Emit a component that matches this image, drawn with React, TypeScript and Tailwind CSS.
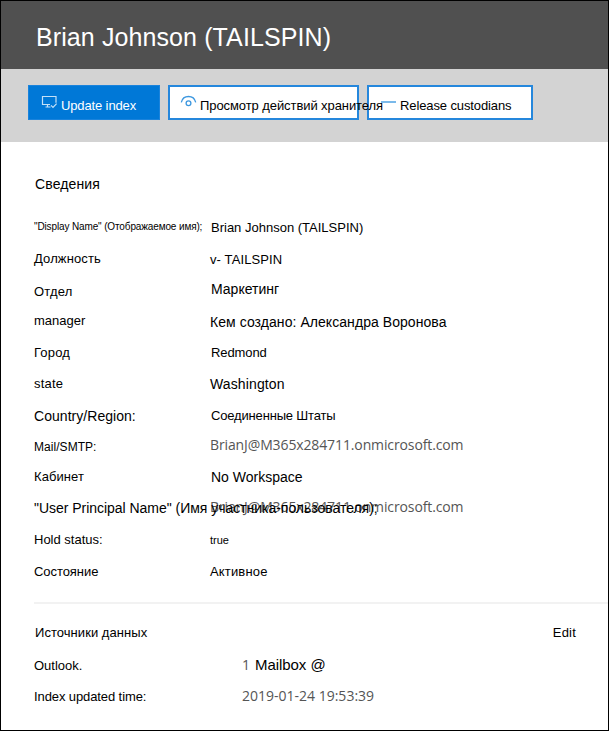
import type { ReactNode } from "react";

type Cell = { text: string; cls: string };
type Row = { label: Cell; value: Cell };

const mail = "pt-[7px] font-['Open_Sans',sans-serif] text-[14px] tracking-[-0.12px] text-[#555555]";

const details: Row[] = [
  {
    label: { text: '"Display Name" (Отображаемое имя);', cls: "pt-[6px] text-[10px] tracking-[-0.13px]" },
    value: { text: "Brian Johnson (TAILSPIN)", cls: "pt-[7px] pl-[1px]" },
  },
  {
    label: { text: "Должность", cls: "pt-[7px] tracking-[0.13px]" },
    value: { text: "v- TAILSPIN", cls: "pt-[8px] tracking-[0.12px]" },
  },
  {
    label: { text: "Отдел", cls: "pt-[9px] tracking-[0.18px]" },
    value: { text: "Маркетинг", cls: "pt-[6px] pl-[1px] text-[14px]" },
  },
  {
    label: { text: "manager", cls: "pt-[7px]" },
    value: { text: "Кем создано: Александра Воронова", cls: "pt-[8px] text-[14px] tracking-[0.06px]" },
  },
  {
    label: { text: "Город", cls: "pt-[8px] tracking-[0.17px]" },
    value: { text: "Redmond", cls: "pt-[8px] pl-[1px] tracking-[-0.1px]" },
  },
  {
    label: { text: "state", cls: "pt-[8px] tracking-[0.2px]" },
    value: { text: "Washington", cls: "pt-[8px] text-[14px] tracking-[0.12px]" },
  },
  {
    label: { text: "Country/Region:", cls: "pt-[9px] text-[14px] tracking-[0.04px]" },
    value: { text: "Соединенные Штаты", cls: "pt-[9px] pl-[1px] tracking-[-0.17px]" },
  },
  {
    label: { text: "Mail/SMTP:", cls: "pt-[9px] text-[12px] tracking-[0.05px]" },
    value: { text: "BrianJ@M365x284711.onmicrosoft.com", cls: mail },
  },
  {
    label: { text: "Кабинет", cls: "pt-[8px] tracking-[0.08px]" },
    value: { text: "No Workspace", cls: "pt-[8px] pl-[1px] text-[14px]" },
  },
  {
    label: {
      text: '"User Principal Name" (Имя участника-пользователя);',
      cls: "z-10 pt-[8px] text-[14px] tracking-[-0.03px]",
    },
    value: { text: "BrianJ@M365x284711.onmicrosoft.com", cls: mail },
  },
  {
    label: { text: "Hold status:", cls: "pt-[9px]" },
    value: { text: "true", cls: "pt-[9px] text-[11px]" },
  },
  {
    label: { text: "Состояние", cls: "pt-[10px] tracking-[-0.06px]" },
    value: { text: "Активное", cls: "pt-[10px] tracking-[0.16px]" },
  },
];

function ActionButton({ className, icon, children }: { className: string; icon: ReactNode; children: ReactNode }) {
  return (
    <button className={`flex h-[35px] shrink-0 items-start border-solid text-left text-[13px] leading-5 whitespace-nowrap ${className}`}>
      {icon}
      {children}
    </button>
  );
}

function MonitorIcon() {
  return (
    <svg className="mt-[9px] ml-[12px] shrink-0" width="17" height="14" viewBox="0 0 17 14" fill="none" stroke="#c3e0f7" strokeWidth="1.2">
      <path d="M9 9.500H1.500V1.500h13.500v6.300M6.500 9.500v2.500M4.500 12h5" />
      <path d="M10 10.400l2 2 3.600-3.800" />
    </svg>
  );
}

function EyeIcon() {
  return (
    <svg className="mt-[8px] ml-[10px] shrink-0" width="17" height="13" viewBox="0 0 17 13" fill="none" stroke="#3c97df" strokeWidth="1.3">
      <path d="M1.300 7.400C2.200 3.600 5 1.500 8.500 1.500s6.300 2.100 7.200 5.900" />
      <circle cx="8.500" cy="8.300" r="2.400" />
    </svg>
  );
}

export default function App() {
  return (
    <div className="flex h-[731px] w-[609px] flex-col overflow-hidden border border-black bg-white font-['Liberation_Sans',Arial,sans-serif] text-[13px] leading-5 text-black">
      <header className="h-[68px] shrink-0 bg-[#505050] pt-[20px] pl-[35px]">
        <h1 className="text-[25px] leading-[32px] tracking-[0.1px] whitespace-nowrap text-white">Brian Johnson (TAILSPIN)</h1>
      </header>

      <div className="flex h-[73px] shrink-0 items-start gap-2 bg-[#d3d3d3] pt-4 pl-[27px]">
        <ActionButton className="w-[132px] border border-[#1a83dc] bg-[#0078d7] text-white" icon={<MonitorIcon />}>
          <span className="mt-[10px] ml-[3px] tracking-[-0.13px]">Update index</span>
        </ActionButton>
        <ActionButton className="z-10 w-[191px] border-2 border-[#2587dc] bg-white" icon={<EyeIcon />}>
          <span className="mt-[9px] ml-[3px] tracking-[-0.08px]">Просмотр действий хранителя</span>
        </ActionButton>
        <ActionButton
          className="w-[166px] border-2 border-[#2587dc] bg-white"
          icon={<span className="mt-[14px] ml-[12px] h-[2px] w-[15px] shrink-0 bg-[#7ab9ea]" />}
        >
          <span className="mt-[9px] ml-[4px] tracking-[-0.11px]">Release custodians</span>
        </ActionButton>
      </div>

      <main className="flex flex-col pl-[33px]">
        <h2 className="h-[69px] pt-[32px] pl-[1px] text-[14px] tracking-[0.12px]">Сведения</h2>
        <dl>
          {details.map((row, i) => (
            <div key={i} className="grid h-[31px] grid-cols-[176px_1fr] whitespace-nowrap">
              <dt className={row.label.cls}>{row.label.text}</dt>
              <dd className={row.value.cls}>{row.value.text}</dd>
            </div>
          ))}
        </dl>

        <section className="mt-[19px] border-t-2 border-[#f2f2f2]">
          <div className="flex justify-between pt-[19px] pr-[32px] pl-[1px]">
            <h2 className="tracking-[0.05px]">Источники данных</h2>
            <button className="tracking-[0.2px]">Edit</button>
          </div>
          <div className="grid grid-cols-[208px_1fr] pt-[13px]">
            <span>Outlook.</span>
            <span className="-mt-px flex gap-[5px] text-[15px] tracking-[-0.05px]">
              <span className="font-['Open_Sans',sans-serif] text-[14px] text-[#555555]">1</span>
              Mailbox @
            </span>
          </div>
          <div className="grid grid-cols-[208px_1fr] pt-[11px]">
            <span className="tracking-[-0.1px]">Index updated time:</span>
            <span className="-mt-px font-['Open_Sans',sans-serif] text-[14px] text-[#555555]">2019-01-24 19:53:39</span>
          </div>
        </section>
      </main>
    </div>
  );
}
